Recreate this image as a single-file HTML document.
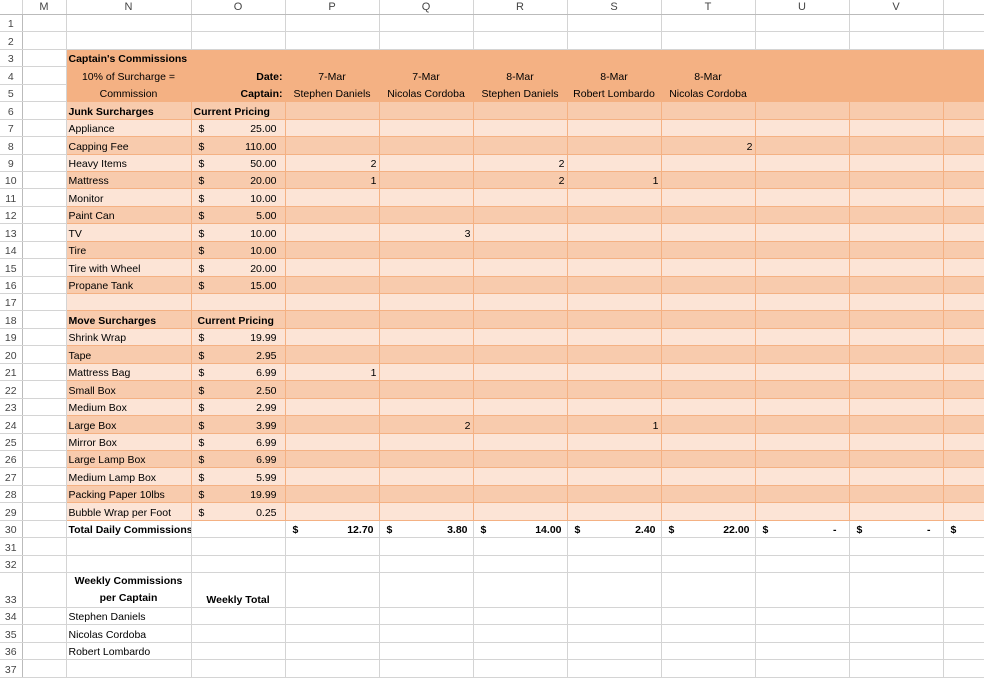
<!DOCTYPE html>
<html><head><meta charset="utf-8"><style>
body{margin:0;width:984px;height:677px;overflow:hidden;background:#fff;font-family:"Liberation Sans",Arial,sans-serif;font-size:10.5px;color:#000}
table{border-collapse:collapse;table-layout:fixed;position:absolute;left:0;top:0;width:984px}
td{height:16.45px;padding:0 2px;border-right:1px solid #d4d4d4;border-bottom:1px solid #d4d4d4;white-space:nowrap;overflow:hidden;line-height:14px;vertical-align:bottom}
tr.hd td{height:14px;text-align:center;color:#444;font-size:11px;border-bottom:1px solid #bbb;vertical-align:middle}
td.rn{text-align:center;color:#444;border-right:1px solid #bbb;padding:0}
.h td.c{background:#F4B183;border-color:#F4B183}
.d td.c{background:#F8CBAD;border-color:#F4B183}
.l td.c{background:#FCE4D6;border-color:#F4B183}
.t td{border-top:1px solid #F4B183}
b{font-weight:bold}
.r{text-align:right}.m{text-align:center}
.p{display:flex;justify-content:space-between;padding:0 6px 0 5px}
tr.tall td{height:33.9px}
.nm td.c{padding:0}
</style></head><body>
<table>
<colgroup><col style="width:22px"><col style="width:44px"><col style="width:125px"><col style="width:94px"><col style="width:94px"><col style="width:94px"><col style="width:94px"><col style="width:94px"><col style="width:94px"><col style="width:94px"><col style="width:94px"><col style="width:41px"></colgroup>
<tr class="hd"><td></td><td>M</td><td>N</td><td>O</td><td>P</td><td>Q</td><td>R</td><td>S</td><td>T</td><td>U</td><td>V</td><td></td></tr>
<tr><td class="rn">1</td><td></td><td></td><td></td><td></td><td></td><td></td><td></td><td></td><td></td><td></td><td></td></tr>
<tr><td class="rn">2</td><td></td><td></td><td></td><td></td><td></td><td></td><td></td><td></td><td></td><td></td><td></td></tr>
<tr class="h"><td class="rn">3</td><td></td><td class="c" style="overflow:visible"><b>Captain's Commissions</b></td><td class="c"></td><td class="c"></td><td class="c"></td><td class="c"></td><td class="c"></td><td class="c"></td><td class="c"></td><td class="c"></td><td class="c"></td></tr>
<tr class="h"><td class="rn">4</td><td></td><td class="c m">10% of Surcharge =</td><td class="c r"><b>Date:</b></td><td class="c m">7-Mar</td><td class="c m">7-Mar</td><td class="c m">8-Mar</td><td class="c m">8-Mar</td><td class="c m">8-Mar</td><td class="c"></td><td class="c"></td><td class="c"></td></tr>
<tr class="h nm"><td class="rn">5</td><td></td><td class="c m">Commission</td><td class="c r" style="padding-right:2px"><b>Captain:</b></td><td class="c m">Stephen Daniels</td><td class="c m">Nicolas Cordoba</td><td class="c m">Stephen Daniels</td><td class="c m">Robert Lombardo</td><td class="c m">Nicolas Cordoba</td><td class="c"></td><td class="c"></td><td class="c"></td></tr>
<tr class="d"><td class="rn">6</td><td></td><td class="c"><b>Junk Surcharges</b></td><td class="c"><b>Current Pricing</b></td><td class="c"></td><td class="c"></td><td class="c"></td><td class="c"></td><td class="c"></td><td class="c"></td><td class="c"></td><td class="c"></td></tr>
<tr class="l"><td class="rn">7</td><td></td><td class="c">Appliance</td><td class="c"><div class="p"><span>$</span><span>25.00</span></div></td><td class="c"></td><td class="c"></td><td class="c"></td><td class="c"></td><td class="c"></td><td class="c"></td><td class="c"></td><td class="c"></td></tr>
<tr class="d"><td class="rn">8</td><td></td><td class="c">Capping Fee</td><td class="c"><div class="p"><span>$</span><span>110.00</span></div></td><td class="c"></td><td class="c"></td><td class="c"></td><td class="c"></td><td class="c r">2</td><td class="c"></td><td class="c"></td><td class="c"></td></tr>
<tr class="l"><td class="rn">9</td><td></td><td class="c">Heavy Items</td><td class="c"><div class="p"><span>$</span><span>50.00</span></div></td><td class="c r">2</td><td class="c"></td><td class="c r">2</td><td class="c"></td><td class="c"></td><td class="c"></td><td class="c"></td><td class="c"></td></tr>
<tr class="d"><td class="rn">10</td><td></td><td class="c">Mattress</td><td class="c"><div class="p"><span>$</span><span>20.00</span></div></td><td class="c r">1</td><td class="c"></td><td class="c r">2</td><td class="c r">1</td><td class="c"></td><td class="c"></td><td class="c"></td><td class="c"></td></tr>
<tr class="l"><td class="rn">11</td><td></td><td class="c">Monitor</td><td class="c"><div class="p"><span>$</span><span>10.00</span></div></td><td class="c"></td><td class="c"></td><td class="c"></td><td class="c"></td><td class="c"></td><td class="c"></td><td class="c"></td><td class="c"></td></tr>
<tr class="d"><td class="rn">12</td><td></td><td class="c">Paint Can</td><td class="c"><div class="p"><span>$</span><span>5.00</span></div></td><td class="c"></td><td class="c"></td><td class="c"></td><td class="c"></td><td class="c"></td><td class="c"></td><td class="c"></td><td class="c"></td></tr>
<tr class="l"><td class="rn">13</td><td></td><td class="c">TV</td><td class="c"><div class="p"><span>$</span><span>10.00</span></div></td><td class="c"></td><td class="c r">3</td><td class="c"></td><td class="c"></td><td class="c"></td><td class="c"></td><td class="c"></td><td class="c"></td></tr>
<tr class="d"><td class="rn">14</td><td></td><td class="c">Tire</td><td class="c"><div class="p"><span>$</span><span>10.00</span></div></td><td class="c"></td><td class="c"></td><td class="c"></td><td class="c"></td><td class="c"></td><td class="c"></td><td class="c"></td><td class="c"></td></tr>
<tr class="l"><td class="rn">15</td><td></td><td class="c">Tire with Wheel</td><td class="c"><div class="p"><span>$</span><span>20.00</span></div></td><td class="c"></td><td class="c"></td><td class="c"></td><td class="c"></td><td class="c"></td><td class="c"></td><td class="c"></td><td class="c"></td></tr>
<tr class="d"><td class="rn">16</td><td></td><td class="c">Propane Tank</td><td class="c"><div class="p"><span>$</span><span>15.00</span></div></td><td class="c"></td><td class="c"></td><td class="c"></td><td class="c"></td><td class="c"></td><td class="c"></td><td class="c"></td><td class="c"></td></tr>
<tr class="l"><td class="rn">17</td><td></td><td class="c"></td><td class="c"></td><td class="c"></td><td class="c"></td><td class="c"></td><td class="c"></td><td class="c"></td><td class="c"></td><td class="c"></td><td class="c"></td></tr>
<tr class="d"><td class="rn">18</td><td></td><td class="c"><b>Move Surcharges</b></td><td class="c" style="padding-left:6px"><b>Current Pricing</b></td><td class="c"></td><td class="c"></td><td class="c"></td><td class="c"></td><td class="c"></td><td class="c"></td><td class="c"></td><td class="c"></td></tr>
<tr class="l"><td class="rn">19</td><td></td><td class="c">Shrink Wrap</td><td class="c"><div class="p"><span>$</span><span>19.99</span></div></td><td class="c"></td><td class="c"></td><td class="c"></td><td class="c"></td><td class="c"></td><td class="c"></td><td class="c"></td><td class="c"></td></tr>
<tr class="d"><td class="rn">20</td><td></td><td class="c">Tape</td><td class="c"><div class="p"><span>$</span><span>2.95</span></div></td><td class="c"></td><td class="c"></td><td class="c"></td><td class="c"></td><td class="c"></td><td class="c"></td><td class="c"></td><td class="c"></td></tr>
<tr class="l"><td class="rn">21</td><td></td><td class="c">Mattress Bag</td><td class="c"><div class="p"><span>$</span><span>6.99</span></div></td><td class="c r">1</td><td class="c"></td><td class="c"></td><td class="c"></td><td class="c"></td><td class="c"></td><td class="c"></td><td class="c"></td></tr>
<tr class="d"><td class="rn">22</td><td></td><td class="c">Small Box</td><td class="c"><div class="p"><span>$</span><span>2.50</span></div></td><td class="c"></td><td class="c"></td><td class="c"></td><td class="c"></td><td class="c"></td><td class="c"></td><td class="c"></td><td class="c"></td></tr>
<tr class="l"><td class="rn">23</td><td></td><td class="c">Medium Box</td><td class="c"><div class="p"><span>$</span><span>2.99</span></div></td><td class="c"></td><td class="c"></td><td class="c"></td><td class="c"></td><td class="c"></td><td class="c"></td><td class="c"></td><td class="c"></td></tr>
<tr class="d"><td class="rn">24</td><td></td><td class="c">Large Box</td><td class="c"><div class="p"><span>$</span><span>3.99</span></div></td><td class="c"></td><td class="c r">2</td><td class="c"></td><td class="c r">1</td><td class="c"></td><td class="c"></td><td class="c"></td><td class="c"></td></tr>
<tr class="l"><td class="rn">25</td><td></td><td class="c">Mirror Box</td><td class="c"><div class="p"><span>$</span><span>6.99</span></div></td><td class="c"></td><td class="c"></td><td class="c"></td><td class="c"></td><td class="c"></td><td class="c"></td><td class="c"></td><td class="c"></td></tr>
<tr class="d"><td class="rn">26</td><td></td><td class="c">Large Lamp Box</td><td class="c"><div class="p"><span>$</span><span>6.99</span></div></td><td class="c"></td><td class="c"></td><td class="c"></td><td class="c"></td><td class="c"></td><td class="c"></td><td class="c"></td><td class="c"></td></tr>
<tr class="l"><td class="rn">27</td><td></td><td class="c">Medium Lamp Box</td><td class="c"><div class="p"><span>$</span><span>5.99</span></div></td><td class="c"></td><td class="c"></td><td class="c"></td><td class="c"></td><td class="c"></td><td class="c"></td><td class="c"></td><td class="c"></td></tr>
<tr class="d"><td class="rn">28</td><td></td><td class="c">Packing Paper 10lbs</td><td class="c"><div class="p"><span>$</span><span>19.99</span></div></td><td class="c"></td><td class="c"></td><td class="c"></td><td class="c"></td><td class="c"></td><td class="c"></td><td class="c"></td><td class="c"></td></tr>
<tr class="l"><td class="rn">29</td><td></td><td class="c">Bubble Wrap per Foot</td><td class="c"><div class="p"><span>$</span><span>0.25</span></div></td><td class="c"></td><td class="c"></td><td class="c"></td><td class="c"></td><td class="c"></td><td class="c"></td><td class="c"></td><td class="c"></td></tr>
<tr class="t"><td class="rn">30</td><td></td><td style="padding:0 0 0 2px"><b>Total Daily Commissions</b></td><td></td><td><div class="p" style="padding-right:3px"><b>$</b><b>12.70</b></div></td><td><div class="p" style="padding-right:3px"><b>$</b><b>3.80</b></div></td><td><div class="p" style="padding-right:3px"><b>$</b><b>14.00</b></div></td><td><div class="p" style="padding-right:3px"><b>$</b><b>2.40</b></div></td><td><div class="p" style="padding-right:3px"><b>$</b><b>22.00</b></div></td><td><div class="p" style="padding-right:10px"><b>$</b><b>-</b></div></td><td><div class="p" style="padding-right:10px"><b>$</b><b>-</b></div></td><td><div class="p"><b>$</b></div></td></tr>
<tr><td class="rn">31</td><td></td><td></td><td></td><td></td><td></td><td></td><td></td><td></td><td></td><td></td><td></td></tr>
<tr><td class="rn">32</td><td></td><td></td><td></td><td></td><td></td><td></td><td></td><td></td><td></td><td></td><td></td></tr>
<tr class="tall"><td class="rn">33</td><td></td><td class="m" style="line-height:17px"><b>Weekly Commissions<br>per Captain</b></td><td class="m"><b>Weekly Total</b></td><td></td><td></td><td></td><td></td><td></td><td></td><td></td><td></td></tr>
<tr><td class="rn">34</td><td></td><td>Stephen Daniels</td><td></td><td></td><td></td><td></td><td></td><td></td><td></td><td></td><td></td></tr>
<tr><td class="rn">35</td><td></td><td>Nicolas Cordoba</td><td></td><td></td><td></td><td></td><td></td><td></td><td></td><td></td><td></td></tr>
<tr><td class="rn">36</td><td></td><td>Robert Lombardo</td><td></td><td></td><td></td><td></td><td></td><td></td><td></td><td></td><td></td></tr>
<tr><td class="rn">37</td><td></td><td></td><td></td><td></td><td></td><td></td><td></td><td></td><td></td><td></td><td></td></tr>
</table>
</body></html>
